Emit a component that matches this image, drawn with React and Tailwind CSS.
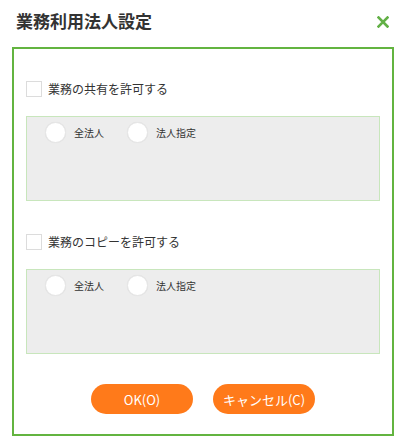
import React from "react";

const font = { fontFamily: '"Noto Sans CJK JP", "Noto Sans", sans-serif' };

function Radio({ label }) {
  return (
    <div className="flex items-center">
      <div className="w-[21px] h-[21px] rounded-full bg-white border border-[#e6e6e6] shadow-[0_0_1px_rgba(0,0,0,0.08)]" />
      <span className="ml-[8px] text-[10px] leading-none text-[#333]">{label}</span>
    </div>
  );
}

function Section({ label }) {
  return (
    <div className="flex flex-col">
      <div className="flex items-center h-[17px]">
        <div className="w-[16px] h-[16px] border border-[#dcdcdc] bg-white" />
        <span className="ml-[6px] text-[12px] leading-none text-[#333]">{label}</span>
      </div>
      <div className="mt-[19px] h-[85px] bg-[#ededed] border border-[#c8e6bc] pt-[5px] pl-[18px]">
        <div className="flex items-center gap-[20px]">
          <div className="w-[62px]"><Radio label="全法人" /></div>
          <Radio label="法人指定" />
        </div>
      </div>
    </div>
  );
}

export default function App() {
  return (
    <div className="w-[406px] h-[448px] bg-white relative" style={font}>
      <div className="flex items-center justify-between h-[47px] pl-[16px] pr-[17px] pb-[6px]">
        <h1 className="text-[17px] font-bold text-[#333] leading-none">業務利用法人設定</h1>
        <svg width="12" height="12" viewBox="0 0 12 12" className="mt-[2px]">
          <path d="M1.5 1.5 L10.5 10.5 M10.5 1.5 L1.5 10.5" stroke="#62b046" strokeWidth="2.6" strokeLinecap="square" />
        </svg>
      </div>
      <div className="mx-[12px] h-[389px] border-2 border-[#63b440] px-[12px] pt-[31px] flex flex-col">
        <Section label="業務の共有を許可する" />
        <div className="mt-[32px]">
          <Section label="業務のコピーを許可する" />
        </div>
        <div className="mt-[30px] flex justify-center gap-[20px]">
          <button className="w-[102px] h-[30px] rounded-full bg-[#ff7a1a] text-white text-[13px] leading-none">OK(O)</button>
          <button className="w-[102px] h-[30px] rounded-full bg-[#ff7a1a] text-white text-[13px] leading-none">キャンセル(C)</button>
        </div>
      </div>
    </div>
  );
}
